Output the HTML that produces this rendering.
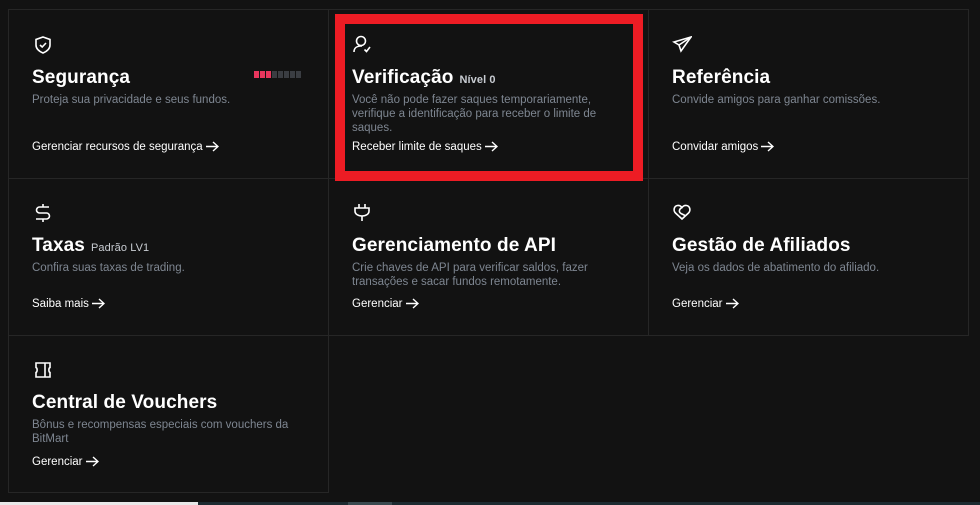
<!DOCTYPE html>
<html><head><meta charset="utf-8"><style>
*{margin:0;padding:0;box-sizing:border-box}
body{width:980px;height:505px;background:#121212;position:relative;overflow:hidden;font-family:"Liberation Sans",sans-serif;color:#fff}
.c{position:absolute;border:1px solid #262626}
.ic{position:absolute;width:20px;height:20px}
.t{position:absolute;font-size:19px;font-weight:bold;white-space:nowrap;letter-spacing:0.1px}
.t small{font-size:11px;color:#c8ccd2;font-weight:bold;margin-left:6px}
.d{position:absolute;font-size:11.5px;color:#7e8691;line-height:14px;width:270px}
.l{position:absolute;font-size:11.5px;color:#fff;white-space:nowrap}
.l svg{vertical-align:-2px;margin-left:3px}
</style></head><body>
<div class="c" style="left:8px;top:9px;width:321px;height:170px"></div>
<div class="c" style="left:328px;top:9px;width:321px;height:170px"></div>
<div class="c" style="left:648px;top:9px;width:321px;height:170px"></div>
<div class="c" style="left:8px;top:178px;width:321px;height:158px"></div>
<div class="c" style="left:328px;top:178px;width:321px;height:158px"></div>
<div class="c" style="left:648px;top:178px;width:321px;height:158px"></div>
<div class="c" style="left:8px;top:335px;width:321px;height:158px"></div>

<div style="position:absolute;left:335px;top:14px;width:308px;height:167px;border:10px solid #ed1c24"></div>

<!-- Row1 -->
<svg class="ic" style="left:33px;top:35px" viewBox="0 0 20 20" fill="none" stroke="#fff" stroke-width="1.6"><path d="M10 2 L17 4.5 V10 C17 14 13.5 16.5 10 18 C6.5 16.5 3 14 3 10 V4.5 Z"/><path d="M7 10 L9.2 12 L13 8"/></svg>
<div class="t" style="left:32px;top:67px">Segurança</div>
<div style="position:absolute;left:254px;top:71px;display:flex;gap:1px">
<i style="width:5px;height:7px;background:#e8365d"></i><i style="width:5px;height:7px;background:#e8365d"></i><i style="width:5px;height:7px;background:#e8365d"></i><i style="width:5px;height:7px;background:#3a3d42"></i><i style="width:5px;height:7px;background:#3a3d42"></i><i style="width:5px;height:7px;background:#3a3d42"></i><i style="width:5px;height:7px;background:#3a3d42"></i><i style="width:5px;height:7px;background:#3a3d42"></i></div>
<div class="d" style="left:32px;top:93px">Proteja sua privacidade e seus fundos.</div>
<div class="l" style="left:32px;top:141px">Gerenciar recursos de segurança<svg width="13" height="11" viewBox="0 0 13 11" fill="none" stroke="#fff" stroke-width="1.4"><path d="M0 5.5H12M7 1L12 5.5L7 10"/></svg></div>

<svg class="ic" style="left:352px;top:34px" viewBox="0 0 20 20" fill="none" stroke="#fff" stroke-width="1.6"><circle cx="9" cy="7" r="4.5"/><path d="M2 18 C2 14 5 12 9 12 H10"/><path d="M12.5 15.5 L14.5 17.5 L18 13"/></svg>
<div class="t" style="left:352px;top:67px">Verificação<small>Nível 0</small></div>
<div class="d" style="left:352px;top:93px;width:280px">Você não pode fazer saques temporariamente, verifique a identificação para receber o limite de saques.</div>
<div class="l" style="left:352px;top:141px">Receber limite de saques<svg width="13" height="11" viewBox="0 0 13 11" fill="none" stroke="#fff" stroke-width="1.4"><path d="M0 5.5H12M7 1L12 5.5L7 10"/></svg></div>

<svg class="ic" style="left:672px;top:34px" viewBox="0 0 20 20" fill="none" stroke="#fff" stroke-width="1.6"><path d="M19 3 L2 8 L7 11 L9 17 Z"/><path d="M7 11 L19 3"/></svg>
<div class="t" style="left:672px;top:67px">Referência</div>
<div class="d" style="left:672px;top:93px">Convide amigos para ganhar comissões.</div>
<div class="l" style="left:672px;top:141px">Convidar amigos<svg width="13" height="11" viewBox="0 0 13 11" fill="none" stroke="#fff" stroke-width="1.4"><path d="M0 5.5H12M7 1L12 5.5L7 10"/></svg></div>

<!-- Row2 -->
<svg class="ic" style="left:33px;top:202px" viewBox="0 0 20 20" fill="none" stroke="#fff" stroke-width="1.6"><path d="M16 5 H6.5 A3 3 0 0 0 6.5 11 H13.5 A3 3 0 0 1 13.5 17 H3"/><path d="M10 2V5M10 17V20"/></svg>
<div class="t" style="left:32px;top:235px">Taxas<small style="font-weight:normal;color:#c8ccd2;margin-left:6px">Padrão LV1</small></div>
<div class="d" style="left:32px;top:261px">Confira suas taxas de trading.</div>
<div class="l" style="left:32px;top:298px">Saiba mais<svg width="13" height="11" viewBox="0 0 13 11" fill="none" stroke="#fff" stroke-width="1.4"><path d="M0 5.5H12M7 1L12 5.5L7 10"/></svg></div>

<svg class="ic" style="left:352px;top:202px" viewBox="0 0 20 20" fill="none" stroke="#fff" stroke-width="1.6"><path d="M7 2V6M13 2V6M3 6H17V9 C17 12 14 14 10 14 C6 14 3 12 3 9Z"/><path d="M10 14V19"/></svg>
<div class="t" style="left:352px;top:235px">Gerenciamento de API</div>
<div class="d" style="left:352px;top:261px;width:280px">Crie chaves de API para verificar saldos, fazer transações e sacar fundos remotamente.</div>
<div class="l" style="left:352px;top:298px">Gerenciar<svg width="13" height="11" viewBox="0 0 13 11" fill="none" stroke="#fff" stroke-width="1.4"><path d="M0 5.5H12M7 1L12 5.5L7 10"/></svg></div>

<svg class="ic" style="left:672px;top:202px" viewBox="0 0 20 20" fill="none" stroke="#fff" stroke-width="1.6"><path d="M10 17 L3.5 11 C1 8.5 2 4 5.5 3.5 C7.5 3.2 9 4.2 10 5.5 C11 4.2 12.5 3.2 14.5 3.5 C18 4 19 8.5 16.5 11 Z"/><path d="M10 5.5 C7 7 6.5 10 9 11.5 L13 13.5"/></svg>
<div class="t" style="left:672px;top:235px">Gestão de Afiliados</div>
<div class="d" style="left:672px;top:261px">Veja os dados de abatimento do afiliado.</div>
<div class="l" style="left:672px;top:298px">Gerenciar<svg width="13" height="11" viewBox="0 0 13 11" fill="none" stroke="#fff" stroke-width="1.4"><path d="M0 5.5H12M7 1L12 5.5L7 10"/></svg></div>

<!-- Row3 -->
<svg class="ic" style="left:33px;top:360px" viewBox="0 0 20 20" fill="none" stroke="#fff" stroke-width="1.6"><path d="M3 3H17V7.5 C15.5 8 15.5 12 17 12.5V17H3V12.5 C4.5 12 4.5 8 3 7.5Z"/><path d="M12 3V17"/></svg>
<div class="t" style="left:32px;top:392px">Central de Vouchers</div>
<div class="d" style="left:32px;top:418px">Bônus e recompensas especiais com vouchers da BitMart</div>
<div class="l" style="left:32px;top:456px">Gerenciar<svg width="13" height="11" viewBox="0 0 13 11" fill="none" stroke="#fff" stroke-width="1.4"><path d="M0 5.5H12M7 1L12 5.5L7 10"/></svg></div>

<div style="position:absolute;left:0;top:502px;width:198px;height:3px;background:#e8e8e8"></div>
<div style="position:absolute;left:198px;top:502px;width:782px;height:3px;background:#1d2b31"></div>
<div style="position:absolute;left:348px;top:502px;width:44px;height:3px;background:#3a4a50"></div>
</body></html>
